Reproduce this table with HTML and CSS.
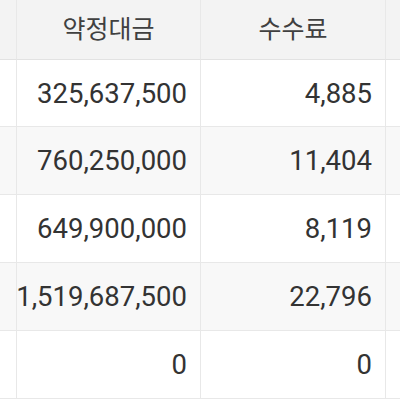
FILE: index.html
```html
<!DOCTYPE html>
<html lang="ko">
<head>
<meta charset="utf-8">
<link rel="stylesheet" href="styles.css">
</head>
<body>
<div class="grid">
  <div class="cell head edge"></div>
  <div class="cell head">약정대금</div>
  <div class="cell head">수수료</div>
  <div class="cell head last"></div>

  <div class="cell edge"></div>
  <div class="cell num">325,637,500</div>
  <div class="cell num">4,885</div>
  <div class="cell last"></div>

  <div class="cell edge alt"></div>
  <div class="cell num alt">760,250,000</div>
  <div class="cell num alt">11,404</div>
  <div class="cell last alt"></div>

  <div class="cell edge"></div>
  <div class="cell num">649,900,000</div>
  <div class="cell num">8,119</div>
  <div class="cell last"></div>

  <div class="cell edge alt"></div>
  <div class="cell num alt">1,519,687,500</div>
  <div class="cell num alt">22,796</div>
  <div class="cell last alt"></div>

  <div class="cell edge"></div>
  <div class="cell num">0</div>
  <div class="cell num">0</div>
  <div class="cell last"></div>
</div>
</body>
</html>
```
FILE: styles.css
```css
html, body {
  margin: 0;
  padding: 0;
  background: #ffffff;
}
body {
  width: 400px;
  height: 400px;
  overflow: hidden;
  font-family: "Noto Sans CJK KR", "Noto Sans", sans-serif;
  color: #333333;
}
.grid {
  display: grid;
  grid-template-columns: 17px 184px 185px 14px;
  grid-template-rows: 60px 67px 68px 68px 68px 68px;
}
.cell {
  box-sizing: border-box;
  border-right: 1px solid #e8e8e8;
  border-bottom: 1px solid #e8e8e8;
  display: flex;
  align-items: center;
  white-space: nowrap;
}
.head {
  background: #f3f3f3;
  justify-content: center;
  color: #404040;
  font-size: 25px;
  padding-bottom: 6px;
  border-bottom-color: #e2e2e2;
}
.num {
  justify-content: flex-end;
  padding-right: 13px;
  font-family: Roboto, "Noto Sans", sans-serif;
  font-size: 27.5px;
}
.alt {
  background: #f8f8f8;
}
.last {
  border-right: none;
}
```
